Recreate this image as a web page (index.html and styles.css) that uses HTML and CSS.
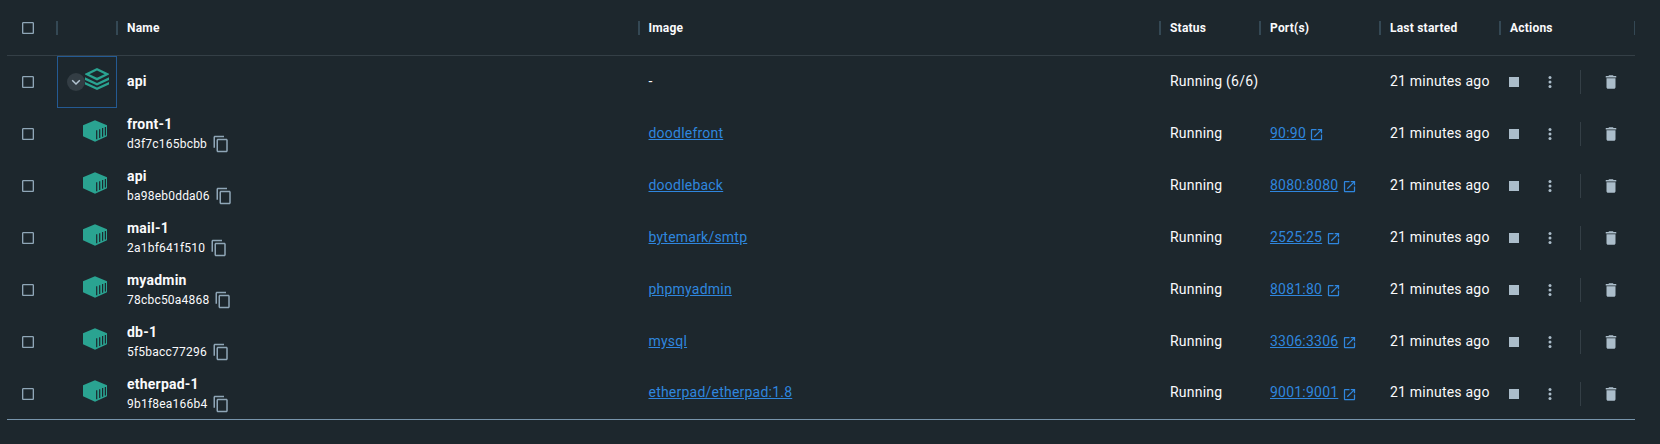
FILE: index.html
```html
<!DOCTYPE html>
<html lang="en">
<head>
<meta charset="utf-8">
<title>Containers</title>
<link rel="stylesheet" href="styles.css">
</head>
<body>
<svg class="sprite" aria-hidden="true">
  <symbol id="box" viewBox="0 0 24 24"><path d="M19 5v14H5V5h14m0-2H5c-1.1 0-2 .9-2 2v14c0 1.100.9 2 2 2h14c1.100 0 2-.9 2-2V5c0-1.100-.9-2-2-2z"/></symbol>
  <symbol id="copy" viewBox="0 0 24 24"><path d="M16 1H4c-1.100 0-2 .9-2 2v14h2V3h12V1zm3 4H8c-1.100 0-2 .9-2 2v14c0 1.100.9 2 2 2h11c1.100 0 2-.9 2-2V7c0-1.100-.9-2-2-2zm0 16H8V7h11v14z"/></symbol>
  <symbol id="open" viewBox="0 0 24 24"><path d="M19 19H5V5h7V3H5c-1.110 0-2 .9-2 2v14c0 1.100.89 2 2 2h14c1.100 0 2-.9 2-2v-7h-2v7zM14 3v2h3.590l-9.830 9.830 1.410 1.410L19 6.410V10h2V3h-7z"/></symbol>
  <symbol id="stop" viewBox="0 0 24 24"><path d="M6 6h12v12H6z"/></symbol>
  <symbol id="more" viewBox="0 0 24 24"><circle cx="12" cy="6" r="2"/><circle cx="12" cy="12" r="2"/><circle cx="12" cy="18" r="2"/></symbol>
  <symbol id="trash" viewBox="0 0 24 24"><path d="M6 19c0 1.100.9 2 2 2h8c1.100 0 2-.9 2-2V7H6v12zM19 4h-3.500l-1-1h-5l-1 1H5v2h14V4z"/></symbol>
  <symbol id="chevron" viewBox="0 0 18 18"><path d="M5.200 7.200 9 11l3.800-3.800" fill="none" stroke="currentColor" stroke-width="1.500"/></symbol>
  <symbol id="stack" viewBox="0 0 24 22"><path d="M12 1.300 22.200 6.200 12 11.100 1.800 6.200z" fill="none" stroke="currentColor" stroke-width="2.300"/><path d="M0 9.300 12 14.900 24 9.300V12L12 17.600 0 12zM0 13.900 12 19.500 24 13.900V16.500L12 22 0 16.500z"/></symbol>
  <symbol id="cube" viewBox="0 0 24 22"><path d="M12 .3 24 5.300V16.200L12 21.700 0 16.200V5.300z"/><path class="slat" d="M13.700 10.300v8.900M16.700 9.200v8.800M19.600 8v8.700M22.400 6.900v8.500" fill="none" stroke-width="1.200"/></symbol>
</svg>
<main class="table">
  <div class="row head">
    <div class="check"><svg><use href="#box"/></svg></div>
    <div class="cell"></div>
    <div class="cell">Name</div>
    <div class="cell">Image</div>
    <div class="cell">Status</div>
    <div class="cell">Port(s)</div>
    <div class="cell">Last started</div>
    <div class="cell last">Actions</div>
  </div>
</main>
<script src="rows.js"></script>
</body>
</html>
```
FILE: rows.js
```
const rows = [
  { name: 'api', status: 'Running (6/6)' },
  { name: 'front-1', id: 'd3f7c165bcbb', image: 'doodlefront', port: '90:90' },
  { name: 'api', id: 'ba98eb0dda06', image: 'doodleback', port: '8080:8080' },
  { name: 'mail-1', id: '2a1bf641f510', image: 'bytemark/smtp', port: '2525:25' },
  { name: 'myadmin', id: '78cbc50a4868', image: 'phpmyadmin', port: '8081:80' },
  { name: 'db-1', id: '5f5bacc77296', image: 'mysql', port: '3306:3306' },
  { name: 'etherpad-1', id: '9b1f8ea166b4', image: 'etherpad/etherpad:1.8', port: '9001:9001' }
];
const icon = (name, cls = '') => `<svg class="${cls}"><use href="#${name}"/></svg>`;
document.querySelector('.table').insertAdjacentHTML('beforeend', rows.map(r => `
  <div class="row">
    <div class="check">${icon('box')}</div>
    ${r.id
      ? `<div class="kind">${icon('cube', 'art')}</div>`
      : `<div class="kind group"><span class="toggle">${icon('chevron')}</span>${icon('stack', 'art')}</div>`}
    <div class="cell name"><strong>${r.name}</strong>${r.id ? `<div class="id"><span>${r.id}</span>${icon('copy')}</div>` : ''}</div>
    <div class="cell">${r.image ? `<a>${r.image}</a>` : '-'}</div>
    <div class="cell">${r.status || 'Running'}</div>
    <div class="cell port">${r.port ? `<a>${r.port}</a>${icon('open')}` : ''}</div>
    <div class="cell">21 minutes ago</div>
    <div class="actions">${icon('stop', 'stop')}${icon('more', 'more')}<i></i>${icon('trash', 'trash')}</div>
  </div>`).join(''));
```
FILE: styles.css
```css
* { box-sizing: border-box; }
body {
  margin: 0;
  background: #1d272d;
  color: #fafafc;
  font: 400 14px/20px Roboto, sans-serif;
  letter-spacing: 0.22px;
}
svg { display: block; flex: none; fill: currentColor; }
.sprite { display: none; }
.table { width: 1628px; margin-left: 7px; border-bottom: 1px solid #7794ab; }
.row {
  display: grid;
  grid-template-columns: 50px 60px 521.5px 521.5px 100px 120px 120px 135px;
  height: 52px;
}
.row:last-child { height: 51px; }
.row > div { height: 52px; min-width: 0; white-space: nowrap; }
.row.head {
  height: 56px;
  border-bottom: 1px solid #343f46;
  font-size: 12px;
  font-weight: 700;
}
.row.head > div { height: 55px; }
.check { display: flex; align-items: center; padding-left: 13px; color: #8fa6b7; }
.check svg { width: 16px; height: 16px; }
.cell { display: flex; align-items: center; padding: 0 0 2px 10px; }
.row:last-child .cell:not(.name) { padding-bottom: 4px; }
.row:last-child .port svg { margin-top: 4px; }
.head .cell { padding-bottom: 0; }
.head .cell::before {
  content: "";
  width: 2px;
  height: 14px;
  margin: 0 9px 0 -11px;
  background: #344854;
}
.head .last::after {
  content: "";
  width: 1px;
  height: 14px;
  margin-left: auto;
  background: #344854;
}
.kind { display: flex; padding: 12px 0 0 26px; color: #2aa391; }
.art { width: 24px; height: 22px; }
.slat { stroke: #1d272d; }
.group { padding: 11px 0 0 9px; border: 1px solid #245a93; }
.toggle {
  display: flex;
  width: 18px;
  height: 18px;
  margin-top: 5px;
  border-radius: 50%;
  background: #333d44;
  color: #b4c5d2;
}
.toggle svg { width: 18px; height: 18px; }
strong { font-weight: 700; }
.name { flex-direction: column; align-items: flex-start; justify-content: center; line-height: 19px; }
.name:has(.id) { padding-bottom: 0; }
.id { display: flex; gap: 5px; height: 19px; font-size: 12px; align-items: center; }
.id span { padding-top: 1px; }
.id svg { width: 18px; height: 18px; color: #8fa6b7; }
a { color: #2f86de; text-decoration: underline; text-underline-offset: 1px; }
.port svg { width: 15px; height: 15px; margin: 2px 0 0 3.500px; color: #2f86de; }
.actions { display: flex; align-items: center; padding-left: 4px; color: #abbdca; }
.stop { width: 20px; height: 20px; }
.more { width: 18px; height: 18px; margin-left: 17px; }
.actions i { width: 1px; height: 24px; margin: 0 21px; background: #343f46; }
.trash { width: 18px; height: 18px; }
```
